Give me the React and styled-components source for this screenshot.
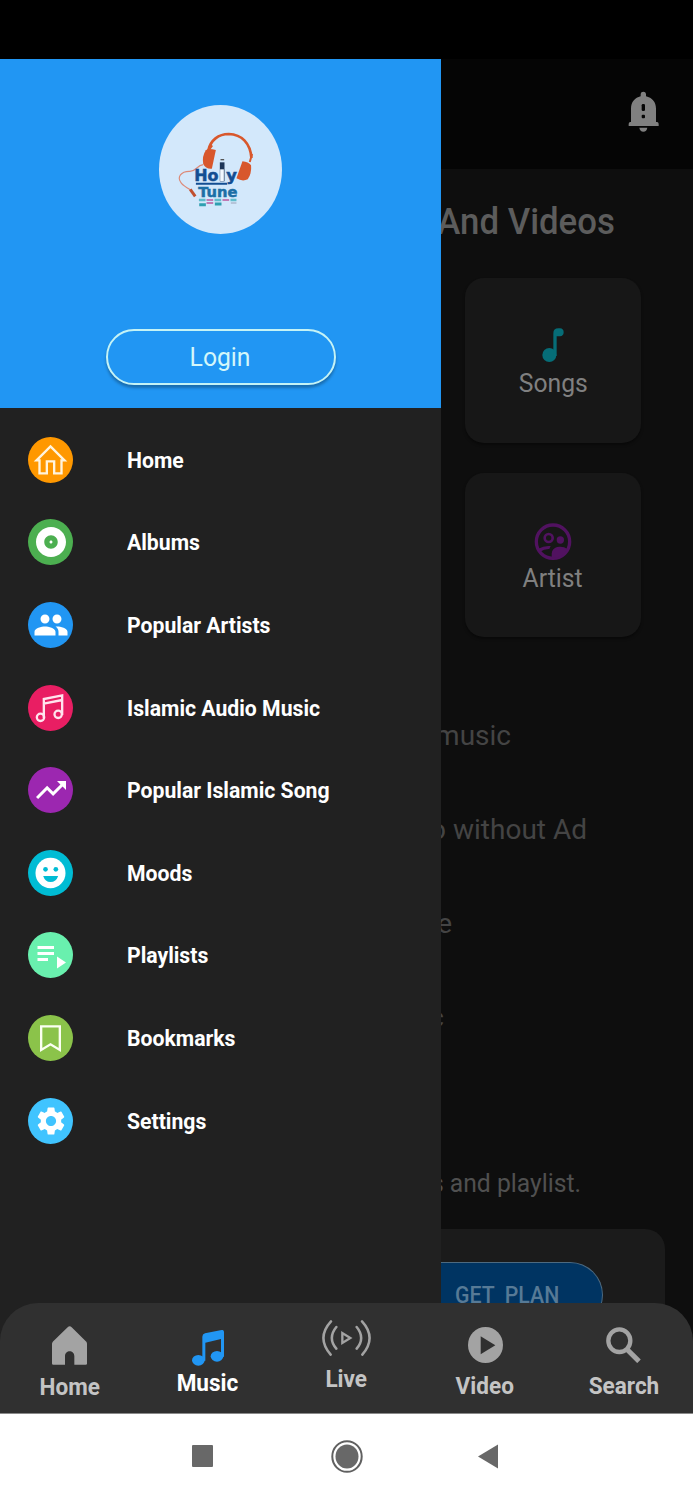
import React, { useState } from 'react';
import styled, { createGlobalStyle, css } from 'styled-components';
import {
  MdAlbum,
  MdPeople,
  MdTrendingUp,
  MdPlaylistPlay,
  MdSettings,
} from 'react-icons/md';

const GlobalStyle = createGlobalStyle`
  *{
    box-sizing: border-box;
  }
  body{
    margin: 0;
    background: #000;
    font-family: Roboto, "Liberation Sans", sans-serif;
  }
  button{
    font-family: inherit;
    padding: 0;
    border: none;
    background: none;
  }
  svg{
    display: block;
    flex: none;
  }
`;

const Phone = styled.div`
  width: 693px;
  height: 1500px;
  display: flex;
  flex-direction: column;
  overflow: hidden;
  background: #000;
`;

const StatusBar = styled.div`
  height: 59px;
  flex: none;
  background: #000;
`;

const Main = styled.div`
  height: 1354px;
  flex: none;
  display: flex;
`;

/* drawer */

const Drawer = styled.aside`
  width: 441px;
  flex: none;
  background: #212121;
`;

const DrawerHeader = styled.div`
  height: 349px;
  padding-top: 46px;
  display: flex;
  flex-direction: column;
  align-items: center;
  background: #2196f3;
`;

const LoginButton = styled.button`
  width: 230px;
  height: 56px;
  margin-top: 95px;
  border: 2px solid #c4f3f6;
  border-radius: 28px;
  background: #2196f3;
  box-shadow: 0 3px 3px rgba(0, 0, 0, 0.28);
  color: #d3f7fa;
  font-size: 26px;
  line-height: 52px;
`;

const Stretch = styled.span`
  display: inline-block;
  white-space: pre;
  transform: scaleX(${(p) => p.$x || 0.95});
  transform-origin: ${(p) => p.$from || 'center'};
`;

const Menu = styled.nav`
  padding-top: 10.5px;
  display: flex;
  flex-direction: column;
`;

const MenuRow = styled.button`
  height: 82.6px;
  padding-left: 28px;
  display: flex;
  align-items: center;
  gap: 54px;
  color: #fff;
  font-size: 22.5px;
  font-weight: 700;
  line-height: 28px;
`;

const Badge = styled.span`
  width: 45px;
  height: 46px;
  display: flex;
  align-items: center;
  justify-content: center;
  border-radius: 50%;
  background: ${(p) => p.$color};
  color: #fff;
`;

/* page behind the drawer */

const Page = styled.div`
  width: 252px;
  display: flex;
  flex-direction: column;
  overflow: hidden;
  background: #050505;
`;

const TopBar = styled.div`
  height: 110px;
  flex: none;
  padding: 32px 33px 0 0;
  display: flex;
  justify-content: flex-end;
`;

const Content = styled.div`
  flex: 1;
  background: #0e0e0e;
`;

const ClippedLine = styled.div`
  height: ${(p) => p.$height}px;
  margin-top: ${(p) => p.$gap || 0}px;
  padding-right: ${(p) => p.$right}px;
  display: flex;
  align-items: center;
  justify-content: flex-end;
  overflow: hidden;
  color: ${(p) => p.$color || '#444'};
  font-size: ${(p) => p.$size || 28}px;
  font-weight: ${(p) => p.$weight || 400};
`;

const Cards = styled.div`
  padding: 4px 0 0 24px;
  display: flex;
  flex-direction: column;
  gap: 30px;
`;

const Card = styled.div`
  width: 176px;
  height: 164.5px;
  padding-top: 50px;
  display: flex;
  flex-direction: column;
  align-items: center;
  border-radius: 19px;
  background: #171717;
  box-shadow: 0 2px 3px rgba(0, 0, 0, 0.4);
  color: #808080;
  font-size: 26px;
  line-height: 30px;
`;

const CardIcon = styled.div`
  height: 40px;
  display: flex;
`;

const Perks = styled.div`
  padding-top: 51px;
`;

const PlanCard = styled.div`
  width: 224px;
  height: 184px;
  margin-top: 20px;
  padding-top: 33px;
  border-radius: 0 20px 0 0;
  background: #1b1b1b;
`;

const PlanButton = styled.div`
  width: 162px;
  height: 66px;
  padding-left: 14px;
  display: flex;
  align-items: center;
  border: 1px solid #4d6a80;
  border-left: none;
  border-radius: 0 33px 33px 0;
  background: #003462;
  color: #577a96;
  font-size: 23px;
  font-weight: 500;
`;

/* bottom bars */

const BottomNav = styled.nav`
  height: 110px;
  flex: none;
  margin-top: -110px;
  display: grid;
  grid-template-columns: repeat(5, 1fr);
  z-index: 1;
  border-radius: 38px 38px 0 0;
  background: #303030;
`;

const NavItem = styled.button`
  padding-top: ${(p) => p.$top}px;
  display: flex;
  flex-direction: column;
  align-items: center;
  gap: ${(p) => p.$gap}px;
  color: #a3a3a3;
  font-size: 23px;
  font-weight: 700;
  line-height: 24px;
  span{
    color: #c4c4c4;
  }
  ${(p) =>
    p.$active &&
    css`
      color: #2196f3;
      span{
        color: #fff;
      }
    `}
`;

const SystemBar = styled.div`
  height: 87px;
  flex: none;
  padding: 0 0 2px 192px;
  display: flex;
  align-items: center;
  border-top: 1px solid #8a8a8a;
  background: #fff;
`;

const SystemKey = styled.span`
  margin-right: ${(p) => p.$after || 0}px;
`;

function Logo() {
  return (
    <svg width="123" height="129" viewBox="57 45 370 387" preserveAspectRatio="none">
      <ellipse cx="242" cy="238.500" rx="185" ry="193.500" fill="#d3e8fb" />
      <path d="M205 182C212 150 236 132 267 132C306 133 332 160 335 204" fill="none" stroke="#d8572c" strokeWidth="8" />
      <path d="M204 184L217 166M337 192L330 216" stroke="#d8572c" strokeWidth="6" />
      <path d="M198 181Q204 174 228 180L216 236Q198 238 190 222Q186 198 198 181Z" fill="#d8572c" />
      <path d="M308 214Q326 216 334 226Q336 252 324 268Q308 276 290 265Z" fill="#d8572c" />
      <path d="M190 224C170 226 168 246 148 244C122 244 112 262 122 276C128 288 142 292 152 300" fill="none" stroke="#dd8a78" strokeWidth="3.500" />
      <path d="M151 298L166 319" stroke="#c0502f" strokeWidth="9" />
      <g fontFamily="DejaVu Sans" fontWeight="700" fill="#134e92" stroke="#134e92" strokeWidth="1.500">
        <text x="163" y="274" fontSize="48" textLength="73" lengthAdjust="spacingAndGlyphs">Ho</text>
        <text x="259" y="272" fontSize="45" textLength="32" lengthAdjust="spacingAndGlyphs">y</text>
        <text x="175" y="320" fontSize="43" fill="#1c6fa5" stroke="#1c6fa5" textLength="118" lengthAdjust="spacingAndGlyphs">Tune</text>
      </g>
      <rect x="240" y="217" width="14" height="57" fill="#1d3557" />
      <rect x="241" y="238" width="11" height="35" fill="#f2f8ff" />
      <path d="M242 209h11" stroke="#555" strokeWidth="4" />
      <path d="M168 281H262" stroke="#134e92" strokeWidth="6" />
      <path d="M177 330h20M224 330h20M272 330h18" stroke="#5fbccb" strokeWidth="7" />
      <path d="M200 330h20M248 330h20M200 339h20" stroke="#c07bb4" strokeWidth="6" />
      <path d="M178 344h20M225 342h20" stroke="#2f9fb0" strokeWidth="9" />
      <path d="M273 339h17" stroke="#a8b3c8" strokeWidth="4" />
    </svg>
  );
}

function HomeOutline() {
  return (
    <svg width="45" height="46" viewBox="0 0 132 138" fill="none" stroke="#fff4de" strokeWidth="7">
      <path d="M33 70H24L66 28L108 70H99V109H77V73H55V109H33Z" />
    </svg>
  );
}

function NotesOutline() {
  return (
    <svg width="45" height="46" viewBox="0 0 132 138" fill="none" stroke="#ffe4ee" strokeWidth="7">
      <circle cx="36" cy="97" r="11" />
      <circle cx="89" cy="88" r="11" />
      <path d="M46 99V42L101 31V90M46 56L101 45" />
    </svg>
  );
}

function Smile() {
  return (
    <svg width="45" height="46" viewBox="0 0 132 138">
      <ellipse cx="66" cy="69" rx="45" ry="46" fill="#fff" />
      <g fill="#00bcd4">
        <circle cx="51" cy="58" r="7" />
        <circle cx="82" cy="58" r="7" />
        <path d="M44 78H89Q83 96 66 96Q50 96 44 78Z" />
      </g>
    </svg>
  );
}

function BookmarkOutline() {
  return (
    <svg width="45" height="46" viewBox="0 0 132 138" fill="none" stroke="#fbfff2" strokeWidth="7">
      <path d="M38 34H94V105L66 88L38 105Z" />
    </svg>
  );
}

const menu = [
  { label: 'Home', color: '#ff9800', icon: <HomeOutline /> },
  { label: 'Albums', color: '#4caf50', icon: <MdAlbum size={36} /> },
  { label: 'Popular Artists', color: '#2196f3', icon: <MdPeople size={36} /> },
  { label: 'Islamic Audio Music', color: '#e91e63', icon: <NotesOutline /> },
  { label: 'Popular Islamic Song', color: '#9c27b0', icon: <MdTrendingUp size={36} /> },
  { label: 'Moods', color: '#00bcd4', icon: <Smile /> },
  { label: 'Playlists', color: '#69f0ae', icon: <MdPlaylistPlay size={36} /> },
  { label: 'Bookmarks', color: '#8bc34a', icon: <BookmarkOutline /> },
  { label: 'Settings', color: '#40c4ff', icon: <MdSettings size={34} /> },
];

const perks = [
  { text: 'music', right: 182 },
  { text: 'o without Ad', right: 106 },
  { text: 'e', right: 241 },
  { text: 'c', right: 249 },
];

const tabs = [
  {
    label: 'Home',
    top: 23,
    gap: 11,
    icon: (
      <svg width="35" height="39" viewBox="0 0 105 116" fill="currentColor">
        <path d="M47 3Q53 -2 59 3L103 47Q105 50 105 53V113Q105 116 101 116H67V90C67 70 39 70 39 90V116H4Q0 116 0 112V53Q0 50 3 46Z" />
      </svg>
    ),
  },
  {
    label: 'Music',
    top: 27,
    gap: 6,
    icon: (
      <svg width="32" height="36" viewBox="0 0 96 108" fill="currentColor">
        <ellipse cx="19" cy="91" rx="19" ry="16" />
        <ellipse cx="75" cy="79" rx="19" ry="16" />
        <path d="M31 92V20Q31 12 39 10L89 0Q96 -1 96 6V80H87V27L40 38V92Z" />
      </svg>
    ),
  },
  {
    label: 'Live',
    top: 17,
    gap: 12,
    icon: (
      <svg width="49" height="36" viewBox="0 0 147 108" fill="none" stroke="currentColor" strokeWidth="7.500" strokeLinecap="round">
        <path d="M27 4Q-18 53 26 104M43 21Q16 54 43 86M120 4Q165 53 121 104M104 21Q131 54 104 86" />
        <path d="M61 39V69L85 54Z" strokeWidth="7" />
      </svg>
    ),
  },
  {
    label: 'Video',
    top: 24,
    gap: 12,
    icon: (
      <svg width="35" height="36" viewBox="0 0 105 108">
        <ellipse cx="52.500" cy="54" rx="52.500" ry="54" fill="currentColor" />
        <path d="M38 28V82L82 55Z" fill="#303030" />
      </svg>
    ),
  },
  {
    label: 'Search',
    top: 24,
    gap: 12,
    icon: (
      <svg width="35" height="36" viewBox="0 0 105 108" fill="none" stroke="currentColor">
        <ellipse cx="40" cy="41" rx="33" ry="34" strokeWidth="13" />
        <path d="M62 66L99 103" strokeWidth="15" />
      </svg>
    ),
  },
];

export default function App() {
  const [active, setActive] = useState('Music');

  return (
    <Phone>
      <GlobalStyle />
      <StatusBar />
      <Main>
        <Drawer>
          <DrawerHeader>
            <Logo />
            <LoginButton>
              <Stretch>Login</Stretch>
            </LoginButton>
          </DrawerHeader>
          <Menu>
            {menu.map((item) => (
              <MenuRow key={item.label}>
                <Badge $color={item.color}>{item.icon}</Badge>
                <Stretch $from="left" $x={0.942}>{item.label}</Stretch>
              </MenuRow>
            ))}
          </Menu>
        </Drawer>

        <Page>
          <TopBar>
            <svg width="32" height="41" viewBox="594 123 96 123" fill="#808080">
              <path d="M603 216V176C603 156 615 143 632 139V133C632 123 648 123 648 133V139C666 143 678 156 678 176V216H682Q686 217 686 222V228H596V222Q596 217 600 216Z" />
              <path d="M628 233H652Q650 245 640 245Q630 245 628 233Z" />
              <rect x="635" y="162" width="10" height="21" rx="4" fill="#050505" />
              <rect x="635" y="194" width="10" height="11" rx="3" fill="#050505" />
            </svg>
          </TopBar>
          <Content>
            <ClippedLine $height={105} $right={78} $size={37} $weight={500} $color="#5c5c5c">
              <Stretch $from="right" $x={0.94}>And Videos</Stretch>
            </ClippedLine>
            <Cards>
              <Card>
                <CardIcon>
                  <svg width="22" height="35" viewBox="336 836 66 105" fill="#066d77">
                    <circle cx="358" cy="917" r="21" />
                    <path d="M370 920V852Q370 837 385 837H390Q401 838 401 849Q401 860 390 861H380V920Z" />
                  </svg>
                </CardIcon>
                <Stretch>Songs</Stretch>
              </Card>
              <Card>
                <CardIcon>
                  <svg width="38" height="38" viewBox="312 217 114 114" fill="#511260">
                    <circle cx="369" cy="273" r="50" fill="none" stroke="#511260" strokeWidth="10" />
                    <circle cx="356" cy="262" r="12" fill="none" stroke="#511260" strokeWidth="8" />
                    <circle cx="391" cy="268" r="11" />
                    <path d="M325 294Q342 284 362 286L358 295Q344 294 330 303Z" />
                    <path d="M366 322Q360 290 388 288Q402 287 412 295Q402 322 366 322Z" />
                  </svg>
                </CardIcon>
                <Stretch>Artist</Stretch>
              </Card>
            </Cards>
            <Perks>
              {perks.map((p) => (
                <ClippedLine key={p.text} $height={94} $right={p.right}>
                  <Stretch $from="right" $x={1}>{p.text}</Stretch>
                </ClippedLine>
              ))}
            </Perks>
            <ClippedLine $height={52} $gap={93} $right={112} $size={26} $color="#505050">
              <Stretch $from="right">s and playlist.</Stretch>
            </ClippedLine>
            <PlanCard>
              <PlanButton>
                <Stretch $from="left" $x={0.925}>GET  PLAN</Stretch>
              </PlanButton>
            </PlanCard>
          </Content>
        </Page>
      </Main>

      <BottomNav>
        {tabs.map((t) => (
          <NavItem
            key={t.label}
            $top={t.top}
            $gap={t.gap}
            $active={active === t.label}
            onClick={() => setActive(t.label)}
          >
            {t.icon}
            <Stretch $x={0.98}>{t.label}</Stretch>
          </NavItem>
        ))}
      </BottomNav>

      <SystemBar>
        <SystemKey $after={118}>
          <svg width="21" height="22">
            <rect width="21" height="22" rx="1" fill="#686868" />
          </svg>
        </SystemKey>
        <SystemKey $after={115}>
          <svg width="32" height="33" viewBox="0 0 32 33">
            <ellipse cx="16" cy="16.500" rx="14.700" ry="15.300" fill="none" stroke="#606060" strokeWidth="2" />
            <ellipse cx="16" cy="16.500" rx="11.500" ry="12" fill="#686868" />
          </svg>
        </SystemKey>
        <SystemKey>
          <svg width="21" height="25" viewBox="0 0 21 25">
            <path d="M0 12.500L20 0.500V24.500Z" fill="#686868" />
          </svg>
        </SystemKey>
      </SystemBar>
    </Phone>
  );
}
